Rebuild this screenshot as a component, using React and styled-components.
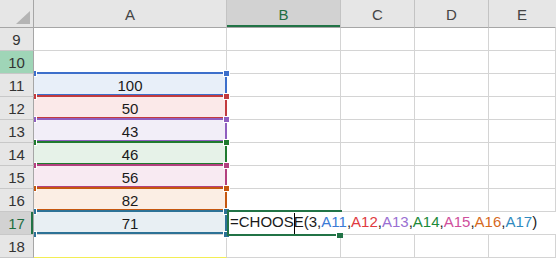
import React from "react";
import styled, { createGlobalStyle } from "styled-components";

const GlobalStyle = createGlobalStyle`
  html, body {
    margin: 0;
    background: #ffffff;
    overflow: hidden;
  }
  body {
    font-family: "Liberation Sans", Arial, sans-serif;
  }
`;

const GREEN = "#217346";

const Sheet = styled.div`
  display: grid;
  grid-template-columns: 34px 193px 114px 74px 74px 1fr;
  grid-template-rows: 28px repeat(10, 23px);
  width: 556px;
  height: 258px;
  font-size: 15px;
  color: #1a1a1a;
`;

const Corner = styled.div`
  position: relative;
  z-index: 2;
  box-sizing: border-box;
  background: #e6e6e6;
  border-right: 1px solid #a6a6a6;
  border-bottom: 1px solid #a6a6a6;
  display: flex;
  align-items: flex-end;
  justify-content: flex-end;
  padding: 0 3px 3px 0;
`;

const ColHeader = styled.div`
  box-sizing: border-box;
  background: ${(p) => (p.$selected ? "#d2d2d2" : "#e6e6e6")};
  color: ${(p) => (p.$selected ? "#1e6e42" : "#444")};
  border-right: 1px solid ${(p) => (p.$last ? "transparent" : "#c3c3c3")};
  border-bottom: 1px solid #a6a6a6;
  box-shadow: ${(p) => (p.$selected ? `inset 0 -2px 0 ${GREEN}` : "none")};
  display: flex;
  align-items: center;
  justify-content: center;
  padding-top: 1px;
`;

const headerBg = { active: "#d2d2d2", ref: "#9fd5b7" };

const RowHeader = styled.div`
  position: relative;
  z-index: 2;
  box-sizing: border-box;
  background: ${(p) => headerBg[p.$state] || "#e6e6e6"};
  color: ${(p) => (p.$state === "active" ? "#1e6e42" : "#333")};
  border-right: 1px solid #a6a6a6;
  border-bottom: 1px solid #c8c8c8;
  box-shadow: ${(p) => (p.$state === "active" ? `inset -2px 0 0 ${GREEN}` : "none")};
  display: flex;
  align-items: center;
  justify-content: center;
  padding-top: 1px;
`;

const Cell = styled.div`
  position: relative;
  box-sizing: border-box;
  background: ${(p) => p.$fill || "#ffffff"};
  border-right: 1px solid #d4d4d4;
  border-bottom: 1px solid ${(p) => p.$underline || "#d4d4d4"};
  display: flex;
  align-items: center;
  justify-content: center;
  padding-top: 1px;
`;

const Frame = styled.div`
  position: absolute;
  z-index: 1;
  top: -2px;
  left: -2px;
  right: -1px;
  bottom: 0;
  border: 2px solid ${(p) => p.$color};
  pointer-events: none;
`;

const Handle = styled.span`
  position: absolute;
  z-index: 1;
  width: 5px;
  height: 5px;
  background: ${(p) => p.$color};
  box-shadow: 0 0 0 1px #ffffff;
  top: ${(p) => (p.$bottom ? "20px" : "-3px")};
  left: ${(p) => (p.$right ? "190px" : "-3px")};
`;

const FormulaCell = styled.div`
  position: relative;
  grid-column: 3 / -1;
  box-sizing: border-box;
  background: #ffffff;
  border-bottom: 1px solid #d4d4d4;
  display: flex;
  align-items: center;
  padding: 1px 0 0 3px;
  white-space: nowrap;
`;

const ActiveFrame = styled.div`
  position: absolute;
  z-index: 1;
  top: -2px;
  left: 0;
  width: 115px;
  height: 26px;
  box-sizing: border-box;
  border: 2px solid ${GREEN};
  border-right: none;
`;

const FillHandle = styled.span`
  position: absolute;
  z-index: 1;
  left: 110px;
  top: 21px;
  width: 6px;
  height: 5px;
  background: ${GREEN};
  box-shadow: -1px -1px 0 #ffffff;
`;

const Ref = styled.span`
  color: ${(p) => p.$color};
`;

const Caret = styled.span`
  display: inline-block;
  width: 1px;
  height: 21px;
  margin-right: -1px;
  background: #000;
  vertical-align: middle;
`;

const ranges = [
  { row: 11, value: 100, line: "#3d6fcb", fill: "#e8eff9", text: "#3b7bd6" },
  { row: 12, value: 50, line: "#c23b3f", fill: "#fbe9e9", text: "#e03a40" },
  { row: 13, value: 43, line: "#8f5ebf", fill: "#f2eef8", text: "#9a6fd2" },
  { row: 14, value: 46, line: "#1f7b2f", fill: "#e6f2e8", text: "#1e8a3a" },
  { row: 15, value: 56, line: "#b3407f", fill: "#f8eaf2", text: "#cf4f9c" },
  { row: 16, value: 82, line: "#c5570f", fill: "#fbeee4", text: "#d66a1e" },
  { row: 17, value: 71, line: "#2d7296", fill: "#e8eff3", text: "#2f8ac0" },
];

function RangeCell({ range }) {
  return (
    <Cell $fill={range.fill}>
      {range.value}
      <Frame $color={range.line} />
      <Handle $color={range.line} />
      <Handle $color={range.line} $right />
      <Handle $color={range.line} $bottom />
      <Handle $color={range.line} $right $bottom />
    </Cell>
  );
}

function Formula() {
  return (
    <FormulaCell>
      <ActiveFrame />
      <FillHandle />
      <span>
        =CHOOS<Caret />E(3
        {ranges.map((r) => (
          <React.Fragment key={r.row}>
            ,<Ref $color={r.text}>A{r.row}</Ref>
          </React.Fragment>
        ))}
        )
      </span>
    </FormulaCell>
  );
}

function EmptyCells() {
  return (
    <>
      <Cell />
      <Cell />
      <Cell />
      <Cell />
    </>
  );
}

export default function App() {
  const rows = [9, 10, 11, 12, 13, 14, 15, 16, 17, 18];
  return (
    <>
      <GlobalStyle />
      <Sheet>
        <Corner>
          <svg width="14" height="13" viewBox="0 0 14 13">
            <polygon points="14,0 14,13 0,13" fill="#b4b4b4" />
          </svg>
        </Corner>
        <ColHeader>A</ColHeader>
        <ColHeader $selected>B</ColHeader>
        <ColHeader>C</ColHeader>
        <ColHeader>D</ColHeader>
        <ColHeader $last>E</ColHeader>

        {rows.map((n) => {
          const range = ranges.find((r) => r.row === n);
          return (
            <React.Fragment key={n}>
              <RowHeader $state={n === 17 ? "active" : n === 10 ? "ref" : undefined}>
                {n}
              </RowHeader>
              {range ? (
                <RangeCell range={range} />
              ) : (
                <Cell $underline={n === 18 ? "#f3ee55" : undefined} />
              )}
              {n === 17 ? <Formula /> : <EmptyCells />}
            </React.Fragment>
          );
        })}
      </Sheet>
    </>
  );
}
